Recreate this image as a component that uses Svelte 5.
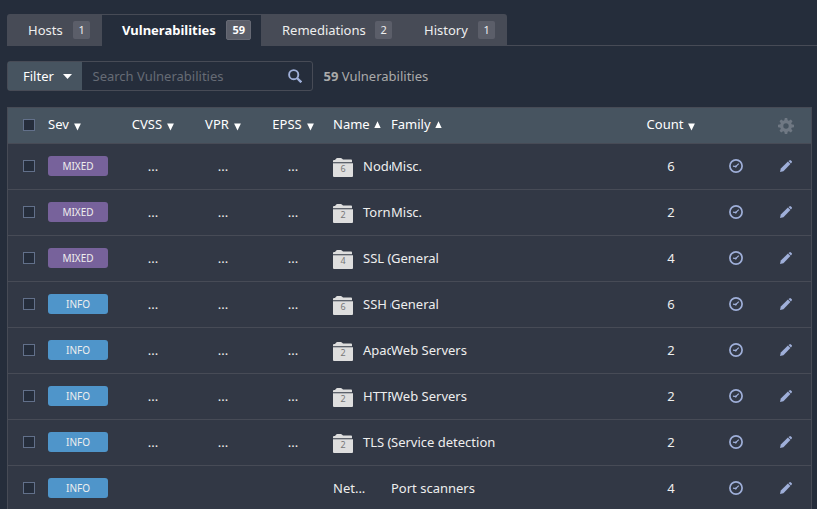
<script>
  const tabs = [
    { label: 'Hosts', count: 1, width: 95 },
    { label: 'Vulnerabilities', count: 59, width: 159, active: true },
    { label: 'Remediations', count: 2, width: 143 },
    { label: 'History', count: 1, width: 103 },
  ];
  const rows = [
    { sev: 'MIXED', group: 6, name: 'Node.js', family: 'Misc.', count: 6 },
    { sev: 'MIXED', group: 2, name: 'Tornado', family: 'Misc.', count: 2 },
    { sev: 'MIXED', group: 4, name: 'SSL (Multiple)', family: 'General', count: 4 },
    { sev: 'INFO', group: 6, name: 'SSH (Multiple)', family: 'General', count: 6 },
    { sev: 'INFO', group: 2, name: 'Apache', family: 'Web Servers', count: 2 },
    { sev: 'INFO', group: 2, name: 'HTTP (Multiple)', family: 'Web Servers', count: 2 },
    { sev: 'INFO', group: 2, name: 'TLS (Multiple)', family: 'Service detection', count: 2 },
    { sev: 'INFO', group: 0, name: 'Net...', family: 'Port scanners', count: 4 },
  ];
</script>

{#snippet arrow(up)}
  <svg class="arrow" class:up width="7" height="8" viewBox="0 0 7 8">
    <path d={up ? 'M3.5 .3 6.7 7H.3z' : 'M.1 .5h6.8L3.5 7.5z'} fill="#fff" />
  </svg>
{/snippet}

<div class="page">
  <nav class="tabs">
    {#each tabs as tab}
      <div class="tab" class:active={tab.active} style="width: {tab.width}px">
        <span>{tab.label}</span><span class="badge">{tab.count}</span>
      </div>
    {/each}
  </nav>

  <div class="toolbar">
    <div class="search">
      <div class="filter">
        Filter
        <svg width="9" height="5" viewBox="0 0 9 5"><path d="M0 0h9L4.5 5z" fill="#fff" /></svg>
      </div>
      <div class="field">
        <span>Search Vulnerabilities</span>
        <svg width="14" height="14" viewBox="0 0 14 14" fill="none" stroke="#9fafd9">
          <circle cx="5.7" cy="5.7" r="4.6" stroke-width="1.9" />
          <path d="M9 9l4.3 4.3" stroke-width="2.4" />
        </svg>
      </div>
    </div>
    <div class="total"><b>59</b> Vulnerabilities</div>
  </div>

  <div class="table">
    <div class="row head">
      <div><i class="check"></i></div>
      <div>Sev {@render arrow(false)}</div>
      <div class="mid">CVSS {@render arrow(false)}</div>
      <div class="mid">VPR {@render arrow(false)}</div>
      <div class="mid">EPSS {@render arrow(false)}</div>
      <div class="name">Name {@render arrow(true)}</div>
      <div>Family {@render arrow(true)}</div>
      <div class="mid">Count {@render arrow(false)}</div>
      <div></div>
      <div class="last">
        <svg width="16" height="16" viewBox="0 0 16 16">
          <g fill="#6f7883">
            {#each [0, 45, 90, 135] as a}
              <path d="M6.8 0h2.4l.6 3v10l-.6 3H6.8l-.6-3V3z" transform="rotate({a} 8 8)" />
            {/each}
            <circle cx="8" cy="8" r="5.9" />
          </g>
          <circle cx="8" cy="8" r="2.7" fill="#475460" />
        </svg>
      </div>
    </div>
    {#each rows as row}
      <div class="row">
        <div><i class="check"></i></div>
        <div><span class="sev" class:mixed={row.sev === 'MIXED'}>{row.sev}</span></div>
        {#each [0, 1, 2] as _}
          <div class="mid">{row.group ? '...' : ''}</div>
        {/each}
        <div class="name">
          {#if row.group}
            <span class="folder">
              <svg width="20" height="19" viewBox="0 0 20 19" fill="#dedede">
                <path d="M0 4.2V3q0-1 1-1h1L3.2.6Q3.6 0 4.3 0h3.5q.7 0 1.1.6L10 1.500h8.200q.8 0 .8 1v1.700z" />
                <path d="M0 5.200h20V18q0 1-1 1H1q-1 0-1-1z" />
              </svg>
              <span>{row.group}</span>
            </span>
          {/if}
          {row.name}
        </div>
        <div>{row.family}</div>
        <div class="mid">{row.count}</div>
        <div class="mid">
          <svg width="14" height="14" viewBox="0 0 14 14" fill="none" stroke="#9fafd9">
            <circle cx="7" cy="7" r="6.1" stroke-width="1.7" />
            <path d="M4 7.200 6.600 7.700 9.800 4.600" stroke-width="1.2" />
            <circle cx="6.800" cy="7.400" r="1" fill="#9fafd9" stroke="none" />
          </svg>
        </div>
        <div class="last">
          <svg width="12" height="12" viewBox="0 0 12 12" fill="#9fafd9">
            <path d="M0 12l.8-3.400L7.900 1.600l2.500 2.500L3.400 11.200z" />
            <path d="M8.500 1.100 9.300.4q.9-.7 1.600 0l.7.700q.7.700 0 1.600l-.7.800z" />
          </svg>
        </div>
      </div>
    {/each}
  </div>
</div>

<style>
  :global(body) { background: #252d3b; }
  .page {
    box-sizing: border-box;
    width: 817px;
    height: 509px;
    overflow: hidden;
    padding: 14px 0 0 7px;
    background: #252d3b;
    color: #eee;
    font: 13px/18px 'Noto Sans', sans-serif;
  }
  svg { display: block; flex: none; }
  .tabs {
    display: flex;
    height: 32px;
    box-sizing: border-box;
    background: linear-gradient(#474b56, #474b56) 0 31px / 100% 1px no-repeat;
  }
  .tab {
    box-sizing: border-box;
    display: flex;
    align-items: center;
    justify-content: space-between;
    padding: 0 12px 0 21px;
    background: #474b56;
  }
  .tab:first-child { border-radius: 3px 0 0 0; }
  .tab:last-child { padding-left: 20px; border-radius: 0 3px 0 0; }
  .tab.active {
    padding: 0 10px 0 20px;
    background: #252d3b;
    border-top: 1px solid #474b56;
    color: #fff;
    font-weight: 700;
  }
  .badge {
    box-sizing: border-box;
    height: 18px;
    padding: 0 5.3px;
    border-radius: 2px;
    background: #5b5e69;
    font-size: 11px;
  }
  .active .badge {
    height: 20px;
    margin-top: -1px;
    padding: 0 5px;
    border: 1px solid #666974;
  }
  .active > span:first-child { margin-top: -1px; }
  .toolbar { display: flex; margin-top: 15px; align-items: center; }
  .search {
    box-sizing: border-box;
    display: flex;
    width: 306px;
    height: 30px;
    border: 1px solid #474b56;
    border-radius: 3px;
  }
  .filter {
    box-sizing: border-box;
    display: flex;
    align-items: center;
    gap: 9px;
    width: 74px;
    padding-left: 15px;
    background: #475460;
    color: #fff;
  }
  .field {
    display: flex;
    flex: 1;
    align-items: center;
    justify-content: space-between;
    padding: 0 10px;
    color: #666b75;
  }
  .field span { margin-left: .5px; }
  .total { margin-left: 10.5px; color: #aaa; }
  .table {
    width: 803px;
    margin-top: 16px;
    border: 1px solid #474b56;
    background: #323845;
  }
  .row {
    box-sizing: border-box;
    display: grid;
    grid-template-columns: 40px 70px 70px 70px 75px 58px 245px 70px 60px 1fr;
    height: 46px;
    border-bottom: 1px solid #474b56;
  }
  .row > div {
    display: flex;
    align-items: center;
    min-width: 0;
    padding-bottom: 2px;
    white-space: nowrap;
  }
  .row > .mid { justify-content: center; }
  .row > .mid:nth-child(5) { padding-right: 5px; }
  .row > .name { overflow: hidden; }
  .row > .last { padding-left: 14px; }
  .head { height: 36px; background: #475460; color: #fff; }
  .head > div:not(:first-child) { padding-bottom: 3px; }
  .head > div:first-child { padding-bottom: 1px; }
  .head > div.last:last-child { padding: 1px 0 0 12px; }
  .check {
    width: 10px;
    height: 10px;
    margin-left: 15px;
    border: 1px solid #62708a;
    background: #252d3b;
  }
  .arrow { margin: 5px 0 0 5px; }
  .arrow.up { margin: 2px 0 0 4px; }
  .sev {
    width: 60px;
    height: 20px;
    border-radius: 3px;
    background: #4f95ca;
    color: #eee;
    font-size: 10px;
    line-height: 20px;
    text-align: center;
  }
  .sev.mixed { background: #77629b; }
  .folder { position: relative; flex: none; margin: 4px 10px 0 0; }
  .folder span {
    position: absolute;
    inset: 4px 0 0;
    color: #777;
    font-size: 9px;
    line-height: 13px;
    text-align: center;
  }
</style>
